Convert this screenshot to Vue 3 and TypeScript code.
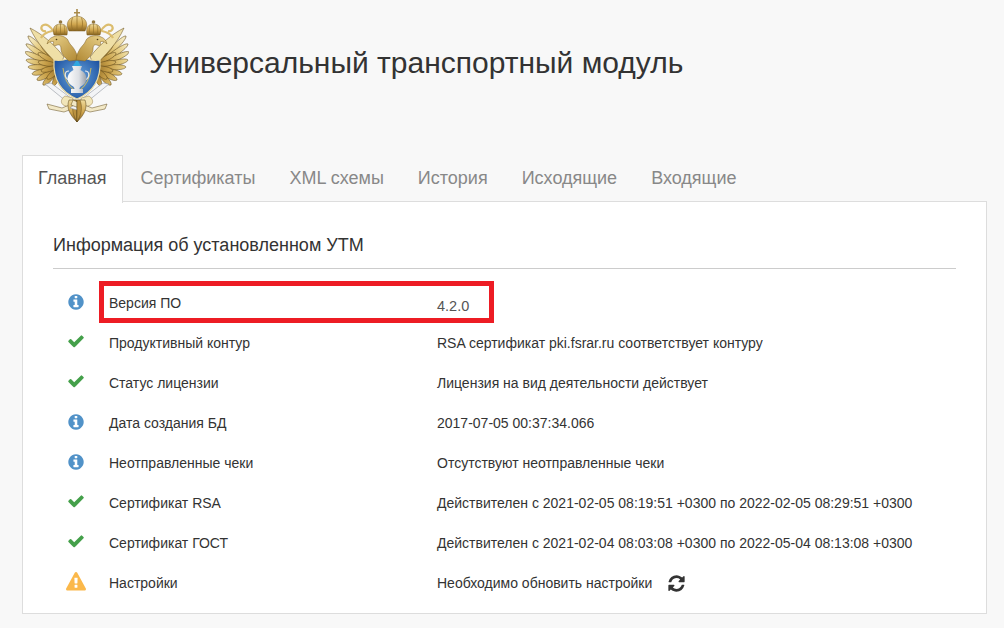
<template>
  <div class="page">
    <header class="site-header">
      <svg class="logo" viewBox="25 8 104 116" width="104" height="116" aria-label="Герб">
        <defs>
          <radialGradient id="wing" gradientUnits="userSpaceOnUse" cx="62" cy="68" r="42">
            <stop offset="0" stop-color="#8a6522" />
            <stop offset="0.4" stop-color="#c79f48" />
            <stop offset="0.75" stop-color="#e6cd84" />
            <stop offset="1" stop-color="#f4e8bc" />
          </radialGradient>
          <linearGradient id="gold" x1="0" y1="0" x2="0" y2="1">
            <stop offset="0" stop-color="#f0dc9c" />
            <stop offset="0.55" stop-color="#d0a64e" />
            <stop offset="1" stop-color="#86621f" />
          </linearGradient>
          <linearGradient id="neck" x1="0" y1="0" x2="1" y2="1">
            <stop offset="0" stop-color="#ecd58f" />
            <stop offset="1" stop-color="#b08833" />
          </linearGradient>
          <radialGradient id="blue" cx="0.5" cy="0.5" r="0.6">
            <stop offset="0" stop-color="#6aa6de" />
            <stop offset="1" stop-color="#1b4f9e" />
          </radialGradient>
          <linearGradient id="silver" x1="0" y1="0" x2="1" y2="0">
            <stop offset="0" stop-color="#fdfdfd" />
            <stop offset="0.6" stop-color="#dcdfe4" />
            <stop offset="1" stop-color="#98a0ab" />
          </linearGradient>
          <g id="back">
            <path v-for="(f, i) in feathers" :key="i" :d="f" fill="url(#wing)" stroke="#5f4818" stroke-width="0.55" />
            <path d="M30 28C42 34 54 44 64 57L59 66C48 54 37 44 30 28Z" fill="#efdfa6" stroke="#6e5420" stroke-width="0.55" />
            <path d="M45 84L51 83L84 108L77 110Z" fill="#f3f4f6" stroke="#7f858e" stroke-width="0.5" />
            <path d="M81 100L62 108L47 104L49 109L64 112L83 105Z" fill="#f2e8c6" stroke="#5f4818" stroke-width="0.5" />
            <path d="M65 96C60 99 60 105 66 106C70 106 73 102 73 98Z" fill="#f1e5b8" stroke="#7d5f23" stroke-width="0.4" />
            <path d="M69 100C66 108 70 115 77 122V100Z" fill="url(#gold)" stroke="#523c12" stroke-width="0.5" />
            <path d="M74 100C71 108 73 115 77 122V100Z" fill="#bb9240" stroke="#523c12" stroke-width="0.4" />
          </g>
          <g id="front">
            <path d="M78 60C77 52 73 47 70 44C68 41 68 39 66 38C62 35 56 35 53 37C50 38 48 40 47 44C50 41 52 41 54 42C52 44 54 47 57 45C60 44 61 46 61 49C61 53 64 57 69 61Z" fill="url(#neck)" stroke="#7d5f23" stroke-width="0.5" />
            <circle cx="56.5" cy="39.5" r="0.8" fill="#4c3810" />
            <path d="M54 32C51 27 46 22 42 26C40 29 43 32 46 31M52 31C47 32 43 34 41 38" fill="none" stroke="#dcbd6e" stroke-width="2.2" />
            <path d="M54 35C52 29 54 24 60.500 24C67 24 68 29 67 35Z" fill="url(#gold)" stroke="#7d5f23" stroke-width="0.5" />
            <path d="M60.500 24V35M57 25C56 28 56 32 57 35M64 25C65 28 65 32 64 35" fill="none" stroke="#8f6e2a" stroke-width="0.6" />
            <circle cx="60.500" cy="22" r="1.8" fill="#94783e" />
          </g>
        </defs>
        <use href="#back" />
        <use href="#back" transform="matrix(-1 0 0 1 154 0)" />
        <!-- щит -->
        <path d="M54 60C62 61 69 60 77 54C85 60 92 61 100 60C101 77 96 91 77 99C58 91 53 77 54 60Z" fill="url(#blue)" stroke="#ecdca4" stroke-width="1.2" />
        <path d="M73 66C75 62 76 62 77 58C78 62 79 62 81 66Z" fill="#2fa6e0" />
        <path d="M63 68C64 77 67 85 74 90M91 68C90 77 87 85 80 90" fill="none" stroke="#c2b56c" stroke-width="1.1" />
        <path d="M69 71C64 71 64 78 69 80M85 71C90 71 90 78 85 80" fill="none" stroke="#e4e6ea" stroke-width="1.2" />
        <path d="M72 66H82L80.500 70C86 73 88 78 85 83C83 86 79.500 86 79.500 89H83V93H71V89H74.500C74.500 86 71 86 69 83C66 78 68 73 73.500 70Z" fill="url(#silver)" />
        <use href="#front" />
        <use href="#front" transform="matrix(-1 0 0 1 154 0)" />
        <!-- центральная корона -->
        <path d="M76.200 9H77.800V12H80V13.600H77.800V16H76.200V13.600H74V12H76.200Z" fill="#a88a4a" />
        <path d="M69 31C65 24 68 17 77 16C86 17 89 24 85 31Z" fill="url(#gold)" stroke="#7d5f23" stroke-width="0.5" />
        <path d="M77 16V31M72.500 17.500C71 22 71 26 73 31M81.500 17.500C83 22 83 26 81 31" fill="none" stroke="#94702a" stroke-width="0.7" />
      </svg>
      <h1 class="site-title">Универсальный транспортный модуль</h1>
    </header>

    <nav class="tabs">
      <a v-for="(tab, i) in tabs" :key="tab" class="tab" :class="{ 'tab--active': i === 0 }">{{ tab }}</a>
    </nav>

    <section class="panel">
      <h2 class="panel-title">Информация об установленном УТМ</h2>
      <div class="info-list">
        <div v-for="(row, i) in rows" :key="row.label" class="info-row">
          <span class="info-icon" :class="{ 'info-icon--check': row.icon === 'check' }">
            <svg :class="'ic--' + row.icon" :width="iconSize(row.icon)" :height="iconSize(row.icon)" viewBox="0 0 1792 1792">
              <path :d="iconPaths[row.icon]" fill="currentColor" />
            </svg>
          </span>
          <span class="info-label">{{ row.label }}</span>
          <span class="info-value" :class="{ 'info-value--version': i === 0 }">
            {{ row.value }}
            <svg v-if="row.refresh" class="ic-refresh" width="19" height="19" viewBox="0 0 1792 1792">
              <path :d="refreshPath" fill="currentColor" />
            </svg>
          </span>
        </div>
        <!-- красная рамка-выделение поверх первой строки -->
        <div class="highlight"></div>
      </div>
    </section>
  </div>
</template>

<script setup lang="ts">
type IconName = 'info' | 'check' | 'warning'

interface Row {
  icon: IconName
  label: string
  value: string
  refresh?: boolean
}

const tabs = ['Главная', 'Сертификаты', 'XML схемы', 'История', 'Исходящие', 'Входящие']

const rows: Row[] = [
  { icon: 'info', label: 'Версия ПО', value: '4.2.0' },
  { icon: 'check', label: 'Продуктивный контур', value: 'RSA сертификат pki.fsrar.ru соответствует контуру' },
  { icon: 'check', label: 'Статус лицензии', value: 'Лицензия на вид деятельности действует' },
  { icon: 'info', label: 'Дата создания БД', value: '2017-07-05 00:37:34.066' },
  { icon: 'info', label: 'Неотправленные чеки', value: 'Отсутствуют неотправленные чеки' },
  { icon: 'check', label: 'Сертификат RSA', value: 'Действителен с 2021-02-05 08:19:51 +0300 по 2022-02-05 08:29:51 +0300' },
  { icon: 'check', label: 'Сертификат ГОСТ', value: 'Действителен с 2021-02-04 08:03:08 +0300 по 2022-05-04 08:13:08 +0300' },
  { icon: 'warning', label: 'Настройки', value: 'Необходимо обновить настройки', refresh: true },
]

const iconPaths: Record<IconName, string> = {
  check: 'M1671 566q0 40-28 68l-724 724-136 136q-28 28-68 28t-68-28l-136-136-362-362q-28-28-28-68t28-68l136-136q28-28 68-28t68 28l294 295 656-657q28-28 68-28t68 28l136 136q28 28 28 68z',
  info: 'M1152 1376v-160q0-14-9-23t-23-9h-96v-512q0-14-9-23t-23-9h-320q-14 0-23 9t-9 23v160q0 14 9 23t23 9h96v320h-96q-14 0-23 9t-9 23v160q0 14 9 23t23 9h448q14 0 23-9t9-23zm-128-896v-160q0-14-9-23t-23-9h-192q-14 0-23 9t-9 23v160q0 14 9 23t23 9h192q14 0 23-9t9-23zm640 416q0 209-103 385.5t-279.5 279.5-385.5 103-385.5-103-279.5-279.5-103-385.5 103-385.5 279.5-279.5 385.5-103 385.5 103 279.5 279.5 103 385.5z',
  warning: 'M1024 1375v-190q0-14-9.5-23.5t-22.5-9.5h-192q-13 0-22.5 9.5t-9.5 23.5v190q0 14 9.5 23.5t22.5 9.5h192q13 0 22.5-9.5t9.5-23.5zm-2-374l18-459q0-12-10-19-13-11-24-11h-220q-11 0-24 11-10 7-10 21l17 457q0 10 10 16.5t24 6.5h185q14 0 23.5-6.5t10.5-16.5zm-14-934l768 1408q35 63-2 126-17 29-46.5 46t-63.5 17h-1536q-34 0-63.5-17t-46.5-46q-37-63-2-126l768-1408q17-31 47-49t65-18 65 18 47 49z',
}

const refreshPath =
  'M1639 1056q0 5-1 7-64 268-268 434.5t-478 166.5q-146 0-282.5-55t-243.5-157l-129 129q-19 19-45 19t-45-19-19-45v-448q0-26 19-45t45-19h448q26 0 45 19t19 45-19 45l-137 137q71 66 161 102t187 36q134 0 250-65t186-179q11-17 53-117 8-23 30-23h192q13 0 22.5 9.5t9.5 22.5zm25-800v448q0 26-19 45t-45 19h-448q-26 0-45-19t-19-45 19-45l138-138q-148-137-349-137-134 0-250 65t-186 179q-11 17-53 117-8 23-30 23h-199q-13 0-22.5-9.5t-9.5-22.5v-7q65-268 270-434.5t480-166.5q146 0 284 55.5t245 156.5l130-129q19-19 45-19t45 19 19 45z'

function iconSize(name: IconName) {
  return name === 'warning' ? 20 : 18
}

// перо крыла: от плеча к тупому кончику
function feather(ox: number, oy: number, x: number, y: number, w: number) {
  const dx = x - ox
  const dy = y - oy
  const len = Math.hypot(dx, dy)
  const nx = (-dy / len) * w
  const ny = (dx / len) * w
  const a = [ox + dx * 0.4, oy + dy * 0.4]
  const b = [ox + dx * 0.95, oy + dy * 0.95]
  return `M${ox} ${oy}C${a[0] + nx} ${a[1] + ny} ${b[0] + nx} ${b[1] + ny} ${x} ${y}C${b[0] - nx} ${b[1] - ny} ${a[0] - nx} ${a[1] - ny} ${ox} ${oy}Z`
}

const feathers: string[] = [
  [28, 36], [26, 44], [25, 52], [26, 60], [28, 67], [32, 74], [37, 80], [43, 85],
].map(([x, y]) => feather(60, 68, x, y, 3.6))
  .concat(
    [[41, 44], [38, 53], [38, 62], [41, 71], [47, 79], [53, 86]].map(([x, y]) => feather(62, 66, x, y, 3.4)),
  )
</script>

<style scoped>
.page {
  padding: 0 17px 15px 22px;
  font-family: "Liberation Sans", Arial, sans-serif;
  color: #333;
}

.site-header {
  display: flex;
  align-items: center;
  gap: 20px;
  height: 155px;
  padding: 8px 0 37px 3px;
  box-sizing: border-box;
}

.logo {
  flex: none;
  align-self: flex-start;
  filter: blur(0.35px);
}

.site-title {
  margin: 0;
  font-size: 30px;
  font-weight: 400;
  line-height: 36px;
  color: #333;
}

.tabs {
  display: flex;
  height: 46px;
}

.tab {
  margin-right: 2px;
  padding: 0 15px;
  border: 1px solid transparent;
  border-bottom: none;
  font-size: 18px;
  line-height: 45px;
  color: #888;
}

.tab--active {
  position: relative;
  z-index: 1;
  height: 47px;
  background: #fff;
  border-color: #ddd;
  color: #555;
}

.panel {
  height: 413px;
  padding: 30px 30px 0;
  background: #fff;
  border: 1px solid #ddd;
  box-sizing: border-box;
}

.panel-title {
  margin: 0;
  padding-bottom: 10px;
  border-bottom: 1px solid #ccc;
  font-size: 18px;
  font-weight: 400;
  line-height: 26px;
  color: #333;
}

.info-list {
  position: relative;
  margin-top: 14px;
}

.info-row {
  display: grid;
  grid-template-columns: 56px 328px 1fr;
  align-items: center;
  height: 40px;
  font-size: 14px;
}

.info-icon {
  display: flex;
  justify-content: center;
  width: 46px;
  padding-bottom: 3px;
}

.info-icon--check {
  padding-bottom: 5px;
}

.ic--info {
  color: #5192c8;
}

.ic--check {
  color: #44a04a;
}

.ic--warning {
  color: #fbb84a;
}

.info-value {
  display: flex;
  align-items: center;
  gap: 15px;
}

.info-value--version {
  padding-top: 6px;
  font-size: 14.5px;
  color: #555;
}

.ic-refresh {
  color: #333;
}

.highlight {
  position: absolute;
  top: -2px;
  left: 46px;
  width: 395px;
  height: 42px;
  border: 5px solid #ed1c24;
  box-sizing: border-box;
}
</style>

<style>
html,
body {
  background: #f8f8f8;
}
</style>
